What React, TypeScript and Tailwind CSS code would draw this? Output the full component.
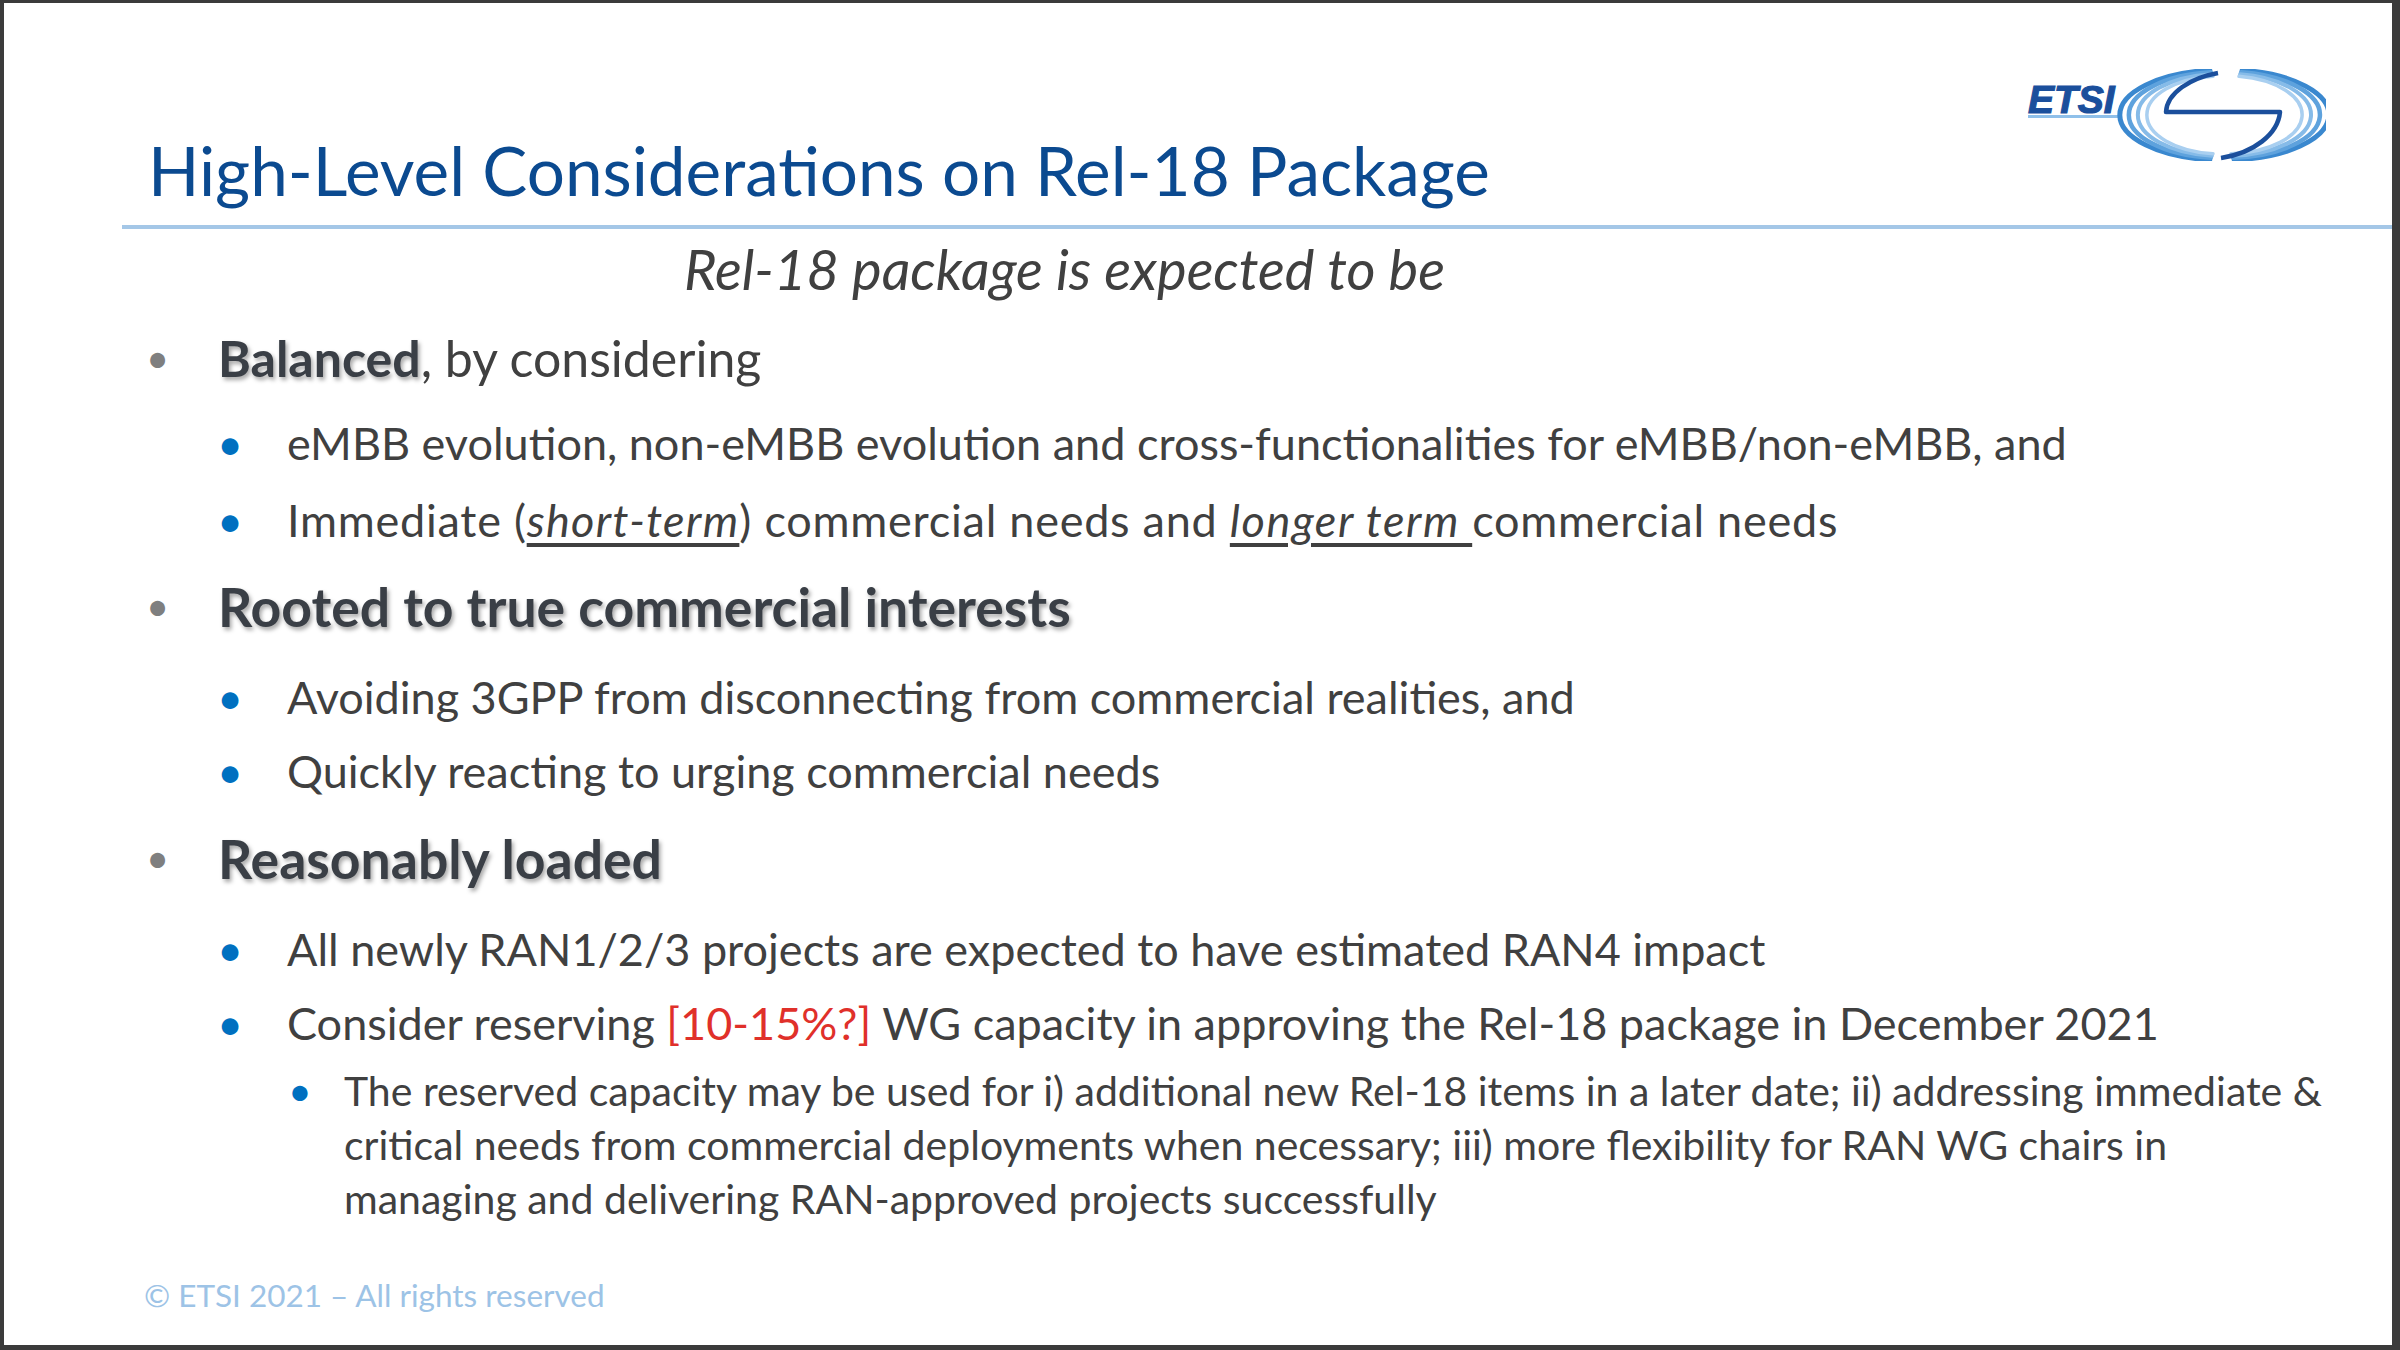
const font = { fontFamily: "Lato, 'Open Sans', sans-serif" };

function EtsiLogo() {
  // concentric swoosh rings around the ETSI wordmark
  const rings = [
    { rx: 102, ry: 45, c: "#3a88cf", w: 5 },
    { rx: 93, ry: 43, c: "#5ea2dd", w: 4.5 },
    { rx: 84, ry: 41, c: "#86bbe8", w: 4 },
    { rx: 75, ry: 39, c: "#a9cff0", w: 3.5 },
  ];
  const cx = 196;
  const cy = 46;
  return (
    <svg width="300" height="92" viewBox="0 0 300 92">
      <text
        x="2"
        y="44"
        fontFamily="'Liberation Sans', Arial, sans-serif"
        fontWeight="700"
        fontStyle="italic"
        fontSize="39"
        fill="#1b4f9c"
        stroke="#1b4f9c"
        strokeWidth="1.2"
      >
        ETSI
      </text>
      <rect x="2" y="46" width="90" height="3" fill="#8fc0ea" />
      {rings.map((r, i) => {
        const dx = 0.12 * r.rx;
        const dy = 0.993 * r.ry;
        return (
          <g key={i} fill="none" stroke={r.c} strokeWidth={r.w} strokeLinecap="round">
            <path d={`M${cx - dx} ${cy - dy} A${r.rx} ${r.ry} 0 0 0 ${cx - dx} ${cy + dy}`} />
            <path d={`M${cx + dx + 8} ${cy - dy} A${r.rx} ${r.ry} 0 0 1 ${cx + dx} ${cy + dy}`} />
          </g>
        );
      })}
      <path
        d="M192 4 C164 9 141 24 140 43 L254 43 C252 65 228 84 195 89"
        fill="none"
        stroke="#1b4f9c"
        strokeWidth="4.5"
        strokeLinejoin="round"
      />
    </svg>
  );
}

function L1({ mt, children }: { mt: string; children: React.ReactNode }) {
  return (
    <div className={`flex pl-[142px] h-[66px] leading-[66px] ${mt}`}>
      <span className="w-[72px] text-[40px] text-[#7f7f7f]">•</span>
      <div className="text-[#3a3f46]">{children}</div>
    </div>
  );
}

function L2({ mt, children }: { mt: string; children: React.ReactNode }) {
  return (
    <div className={`flex pl-[213px] h-[54px] leading-[54px] text-[45px] text-[#404040] whitespace-nowrap ${mt}`}>
      <span className="w-[70px] text-[#0070c0]">•</span>
      <div>{children}</div>
    </div>
  );
}

const shadow = "[text-shadow:2px_3px_4px_rgba(0,0,0,0.35)]";

export default function App() {
  return (
    <div className="w-[2400px] h-[1350px] bg-[#3b3b3b] pt-[3px] pl-[4px] pr-[8px] pb-[5px]" style={font}>
      <div className="w-full h-full bg-white flex flex-col">
        {/* Header */}
        <div className="flex justify-between items-start">
          <h1 className="pt-[127px] pl-[144px] h-[207px] text-[67.4px] leading-[80px] text-[#0b4a90] whitespace-nowrap">
            High-Level Considerations on Rel-18 Package
          </h1>
          <div className="mt-[66px] mr-[66px]">
            <EtsiLogo />
          </div>
        </div>
        <div className="mt-[15px] ml-[118px] h-[4px] bg-[#a4c7e7]" />

        <div className="mt-[10px] pl-[680px] h-[60px] leading-[60px] text-[56px] italic text-[#404040]">
          Rel-18 package is expected to be
        </div>

        {/* Balanced */}
        <div className="flex pl-[142px] h-[60px] leading-[60px] mt-[29px]">
          <span className="w-[72px] text-[40px] text-[#7f7f7f]">•</span>
          <div className="text-[50px] text-[#404040]">
            <span className={`font-bold text-[#3a3f46] ${shadow}`}>Balanced</span>, by considering
          </div>
        </div>
        <L2 mt="mt-[28px]">eMBB evolution, non-eMBB evolution and cross-functionalities for eMBB/non-eMBB, and</L2>
        <L2 mt="mt-[23px]">
          <span className="tracking-[0.75px]">
            Immediate (<span className="italic underline underline-offset-[6px] tracking-[1.3px]">short-term</span>)
            commercial needs and{" "}
            <span className="italic underline underline-offset-[6px] tracking-[1.6px]">longer term </span>
            commercial needs
          </span>
        </L2>

        {/* Rooted */}
        <L1 mt="mt-[26px]">
          <span className={`text-[53.5px] font-bold ${shadow}`}>Rooted to true commercial interests</span>
        </L1>
        <L2 mt="mt-[31px]">Avoiding 3GPP from disconnecting from commercial realities, and</L2>
        <L2 mt="mt-[20px]">Quickly reacting to urging commercial needs</L2>

        {/* Reasonably loaded */}
        <L1 mt="mt-[27px]">
          <span className={`text-[53.5px] font-bold ${shadow}`}>Reasonably loaded</span>
        </L1>
        <L2 mt="mt-[31px]">All newly RAN1/2/3 projects are expected to have estimated RAN4 impact</L2>
        <L2 mt="mt-[20px]">
          Consider reserving <span className="text-[#e0302a]">[10-15%?]</span> WG capacity in approving the Rel-18
          package in December 2021
        </L2>

        <div className="flex pl-[284px] mt-[14px] text-[41px] leading-[54px] text-[#404040]">
          <span className="w-[56px] text-[#0070c0]">•</span>
          <div className="whitespace-nowrap">
            <div>
              The reserved capacity may be used for i) additional new Rel-18 items in a later date; ii) addressing
              immediate &amp;
            </div>
            <div>
              critical needs from commercial deployments when necessary; iii) more flexibility for RAN WG chairs in
            </div>
            <div>managing and delivering RAN-approved projects successfully</div>
          </div>
        </div>

        <div className="mt-[51px] pl-[140px] h-[36px] leading-[36px] text-[31.5px] text-[#9dc3e6]">
          © ETSI 2021 – All rights reserved
        </div>
      </div>
    </div>
  );
}
